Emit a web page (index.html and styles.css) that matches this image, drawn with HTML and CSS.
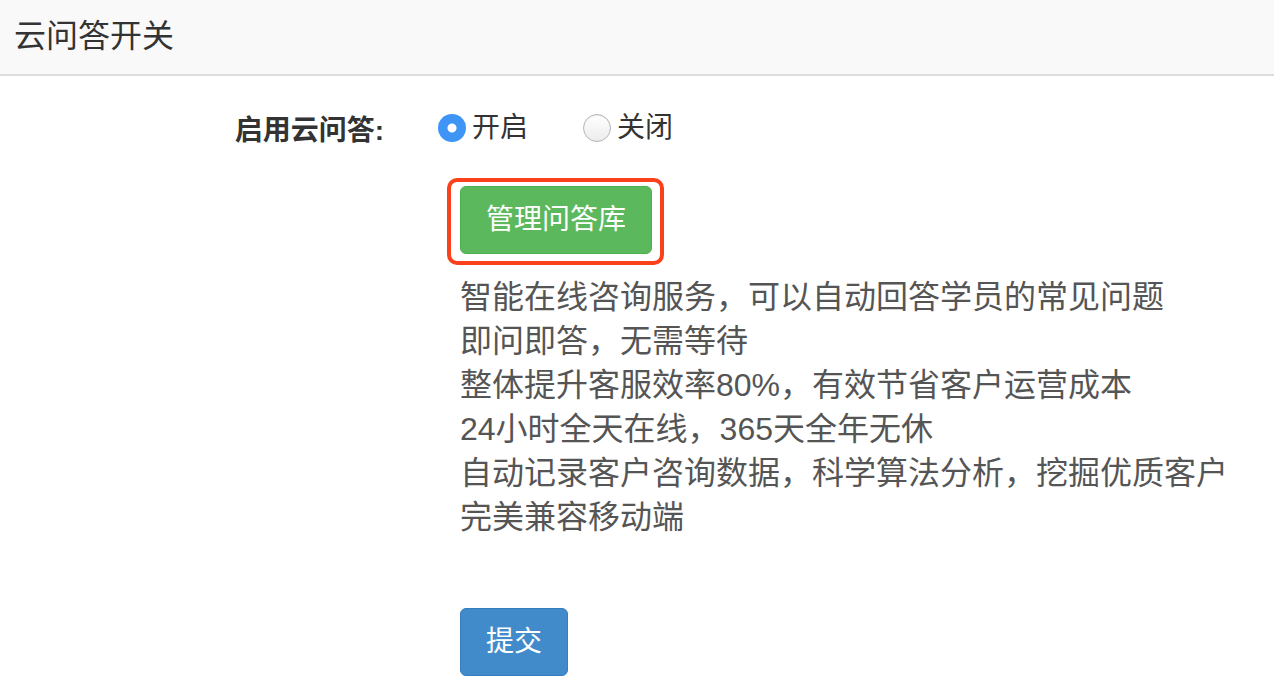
FILE: index.html
```html
<!DOCTYPE html>
<html lang="zh-CN">
<head>
    <meta charset="UTF-8">
    <meta name="viewport" content="width=device-width, initial-scale=1.0">
    <title>云问答开关</title>
    <link rel="stylesheet" href="styles.css">
</head>
<body>
    <div class="panel-heading">
        <h3 class="panel-title">云问答开关</h3>
    </div>

    <form class="qa-form">
        <div class="form-row">
            <label class="row-label">启用云问答:</label>
            <div class="radio-group">
                <label class="radio-item">
                    <span class="radio checked"></span>开启
                </label>
                <label class="radio-item">
                    <span class="radio"></span>关闭
                </label>
            </div>
        </div>

        <div class="form-body">
            <div class="mark-wrap">
                <button type="button" class="btn btn-success">管理问答库</button>
            </div>

            <div class="desc">
                <div>智能在线咨询服务，可以自动回答学员的常见问题</div>
                <div>即问即答，无需等待</div>
                <div>整体提升客服效率80%，有效节省客户运营成本</div>
                <div>24小时全天在线，365天全年无休</div>
                <div>自动记录客户咨询数据，科学算法分析，挖掘优质客户</div>
                <div>完美兼容移动端</div>
            </div>

            <button type="submit" class="btn btn-primary">提交</button>
        </div>
    </form>
</body>
</html>
```

FILE: styles.css
```css
body {
    margin: 0;
    font-family: "Liberation Sans", "Noto Sans CJK SC", sans-serif;
    color: #333;
    background-color: #fff;
}
.panel-heading {
    height: 66px;
    padding: 0 0 8px 14px;
    display: flex;
    align-items: center;
    background-color: #f9f9f9;
    border-bottom: 2px solid #ddd;
}
.panel-title {
    margin: 0;
    font-size: 32px;
    font-weight: normal;
    color: #333;
}
.form-row {
    display: flex;
    align-items: center;
    height: 40px;
    margin-top: 32px;
}
.row-label {
    width: 384px;
    text-align: right;
    font-size: 28px;
    font-weight: bold;
    color: #333;
}
.radio-group {
    display: flex;
    margin-left: 54px;
    gap: 55px;
}
.radio-item {
    display: flex;
    align-items: center;
    gap: 6px;
    font-size: 28px;
    line-height: 40px;
    color: #333;
}
.radio {
    width: 28px;
    height: 28px;
    border-radius: 50%;
    box-sizing: border-box;
    border: 1px solid #b5b5b5;
    background: linear-gradient(#fff, #ececec);
    box-shadow: inset 0 1px 1px rgba(0, 0, 0, 0.08);
}
.radio.checked {
    border: none;
    background: radial-gradient(circle, #fff 0, #fff 4px, #3f95f5 5px);
    box-shadow: none;
}
.form-body {
    padding-left: 460px;
}
.mark-wrap {
    position: relative;
    display: inline-block;
    margin-top: 38px;
}
/* red highlight frame drawn over the screenshot */
.mark-wrap::after {
    content: "";
    position: absolute;
    left: -13px;
    top: -8px;
    right: -12px;
    bottom: -11px;
    border: 4px solid #fb401c;
    border-radius: 10px;
}
.btn {
    display: block;
    padding: 13px 25px;
    font-family: inherit;
    font-size: 28px;
    line-height: 40px;
    color: #fff;
    border-radius: 6px;
    border: 1px solid transparent;
}
.btn-success {
    background-color: #5cb85c;
    border-color: #4cae4c;
}
.btn-primary {
    background-color: #428bca;
    border-color: #357ebd;
}
.desc {
    margin-top: 21px;
    font-size: 32px;
    line-height: 44px;
    color: #555;
}
.desc + .btn {
    margin-top: 69px;
}
```
